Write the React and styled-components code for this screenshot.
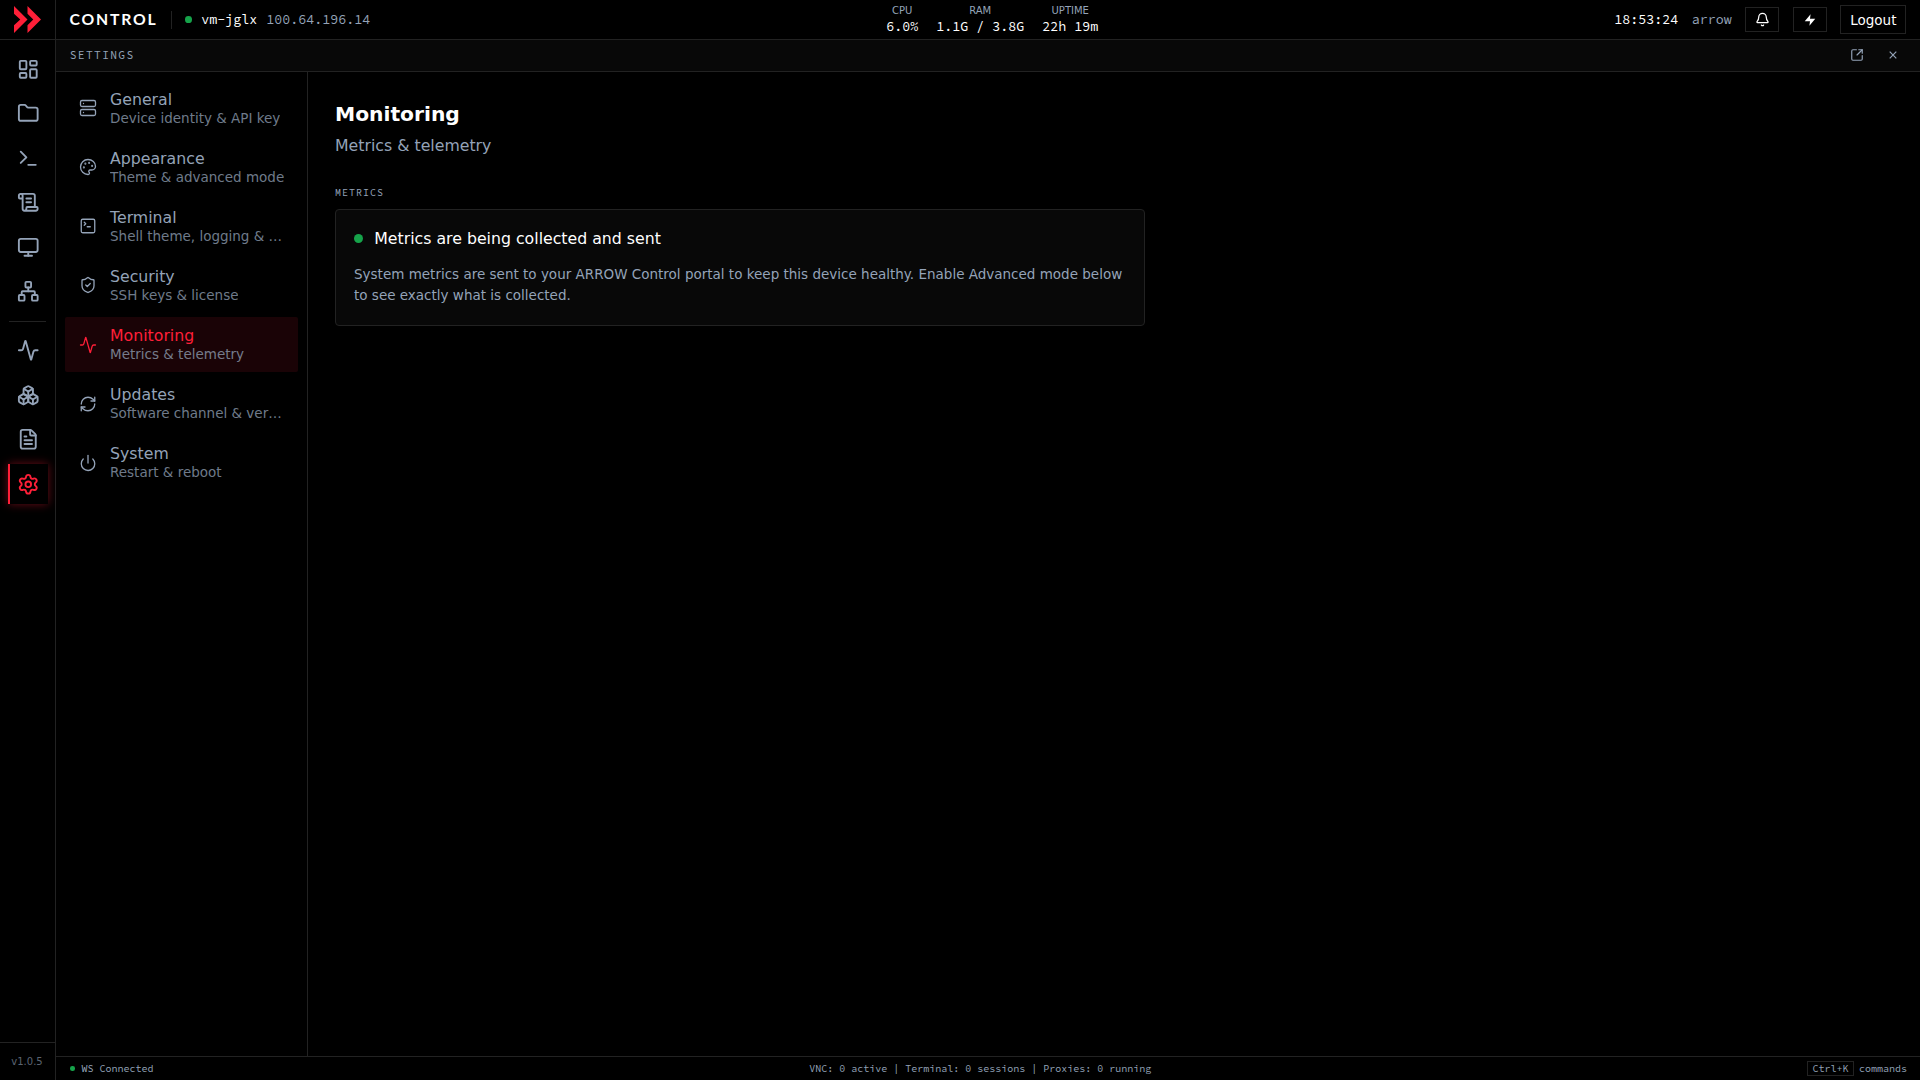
import React from 'react';
import styled, { createGlobalStyle, css } from 'styled-components';
import {
  Activity,
  Bell,
  Boxes,
  FileText,
  Folder,
  LayoutDashboard,
  Monitor,
  Network,
  Palette,
  Power,
  RefreshCw,
  ScrollText,
  Server,
  Settings,
  ShieldCheck,
  SquareArrowOutUpRight,
  SquareTerminal,
  Terminal,
} from 'lucide-react';

const sans = '"DejaVu Sans", sans-serif';
const mono = '"Source Code Pro", "DejaVu Sans Mono", monospace';
const brandFont = 'Lato, sans-serif';

const accent = '#ff1f38';
const green = '#16a34a';
const line = '#222222';
const panel = '#080808';
const muted = '#94a3b8';
const white = '#ffffff';

const GlobalStyle = createGlobalStyle`
  * {
    box-sizing: border-box;
  }

  html {
    font-size: 18px;
  }

  body {
    margin: 0;
    background: #000;
    color: ${white};
    font-family: ${sans};
  }

  h1, p {
    margin: 0;
  }

  button {
    padding: 0;
    border: 0;
    background: none;
    color: inherit;
    font-family: inherit;
  }
`;

const Shell = styled.div`
  display: flex;
  width: 100%;
  height: 100vh;
  overflow: hidden;
`;

const Rail = styled.aside`
  display: flex;
  flex-direction: column;
  flex: none;
  width: 56px;
  border-right: 1px solid ${line};
`;

const LogoBox = styled.div`
  display: flex;
  align-items: center;
  justify-content: center;
  height: 40px;
  border-bottom: 1px solid ${line};
`;

const RailNav = styled.nav`
  display: flex;
  flex-direction: column;
  align-items: center;
  flex: 1;
  gap: 0.25rem;
  padding: 0.5rem 0 0.5rem 1px;
`;

const RailButton = styled.button`
  display: flex;
  align-items: center;
  justify-content: center;
  width: 40px;
  height: 40px;
  color: ${muted};

  ${({ $active }) => $active && css`
    color: ${accent};
    background: #000;
    box-shadow: inset 2px 0 0 ${accent}, 0 0 9px rgba(255, 31, 56, 0.4);
  `}
`;

const RailDivider = styled.div`
  width: 37px;
  height: 1px;
  margin: 0.25rem 1px 0.25rem 0;
  background: ${line};
`;

const Version = styled.div`
  height: 38px;
  padding-right: 1px;
  border-top: 1px solid ${line};
  color: #5b6472;
  font-size: 10px;
  line-height: 37px;
  text-align: center;
`;

const Page = styled.div`
  display: flex;
  flex-direction: column;
  flex: 1;
  min-width: 0;
`;

const Header = styled.header`
  display: flex;
  align-items: center;
  justify-content: space-between;
  flex: none;
  height: 40px;
  padding: 0 0.75rem;
  border-bottom: 1px solid ${line};
`;

const HeaderGroup = styled.div`
  display: flex;
  align-items: center;
  gap: 0.75rem;
`;

const Brand = styled.span`
  padding-bottom: 2px;
  font-family: ${brandFont};
  font-size: 15.75px;
  font-weight: 700;
  letter-spacing: 1.8px;
`;

const HeaderDivider = styled.span`
  width: 1px;
  height: 18px;
  background: ${line};
`;

const Host = styled.div`
  display: flex;
  align-items: center;
  gap: 0.5rem;
`;

const Dot = styled.span`
  flex: none;
  width: ${({ $size }) => $size};
  height: ${({ $size }) => $size};
  border-radius: 50%;
  background: ${green};
`;

const Mono = styled.span`
  font-family: ${mono};
  font-size: 13.333px;
  color: ${({ $muted }) => ($muted ? muted : white)};
`;

const Stats = styled.div`
  display: flex;
  gap: 1rem;
`;

const Stat = styled.div`
  display: flex;
  flex-direction: column;
  align-items: center;
`;

const StatLabel = styled.span`
  color: ${muted};
  font-size: 10px;
  line-height: 15px;
`;

const StatValue = styled.span`
  font-family: ${mono};
  font-size: 13.333px;
  line-height: 18px;
`;

const IconButton = styled.button`
  display: flex;
  align-items: center;
  justify-content: center;
  width: 34px;
  height: 25px;
  border: 1px solid ${line};
`;

const LogoutButton = styled.button`
  height: 29px;
  padding: 0 9px;
  border: 1px solid ${line};
  font-size: 0.75rem;
`;

const TitleBar = styled.div`
  display: flex;
  align-items: center;
  justify-content: space-between;
  flex: none;
  height: 32px;
  padding: 0 0.75rem 0 13.75px;
  border-bottom: 1px solid ${line};
  background: ${panel};
`;

const TitleText = styled.span`
  padding-bottom: 2px;
  color: ${muted};
  font-family: ${mono};
  font-size: 11.25px;
  letter-spacing: 1.35px;
`;

const TitleActions = styled.div`
  display: flex;
  align-items: center;
  gap: 25px;
  padding: 0 9.5px 1px 0;
  color: ${muted};
`;

const Body = styled.div`
  display: flex;
  flex: 1;
  min-height: 0;
`;

const SideNav = styled.nav`
  display: flex;
  flex-direction: column;
  flex: none;
  gap: 0.25rem;
  width: 14rem;
  padding: 0.5rem;
  border-right: 1px solid ${line};
`;

const NavItem = styled.a`
  display: flex;
  align-items: center;
  gap: 0.75rem;
  padding: 0.5rem 0.75rem;
  border-radius: 2px;
  background: ${({ $active }) => ($active ? 'rgba(255, 31, 56, 0.1)' : 'transparent')};
  color: ${({ $active }) => ($active ? accent : muted)};

  svg {
    flex: none;
  }
`;

const NavText = styled.div`
  min-width: 0;
`;

const NavTitle = styled.div`
  font-size: 0.875rem;
  line-height: 1.25;
`;

const NavHint = styled.div`
  overflow: hidden;
  color: ${muted};
  font-size: 0.75rem;
  line-height: 1.25;
  opacity: 0.75;
  text-overflow: ellipsis;
  white-space: nowrap;
`;

const Main = styled.main`
  flex: 1;
  padding: 1.5rem;
`;

const Heading = styled.h1`
  font-size: 1.125rem;
  font-weight: 700;
  line-height: 31.5px;
`;

const Subtitle = styled.p`
  margin-top: 4.5px;
  color: ${muted};
  font-size: 0.875rem;
  line-height: 22.5px;
`;

const SectionLabel = styled.div`
  margin: 27px 0 9px;
  color: ${muted};
  font-family: ${mono};
  font-size: 10px;
  letter-spacing: 1px;
  line-height: 15px;
`;

const Card = styled.section`
  width: 45rem;
  padding: 1rem;
  border: 1px solid ${line};
  border-radius: 4px;
  background: ${panel};
`;

const CardTitle = styled.div`
  display: flex;
  align-items: center;
  gap: 0.625rem;
  font-size: 0.875rem;
  line-height: 22.5px;
`;

const CardText = styled.p`
  margin-top: 0.75rem;
  color: ${muted};
  font-size: 0.75rem;
  line-height: 21.5px;
`;

const Footer = styled.footer`
  display: flex;
  align-items: center;
  justify-content: space-between;
  flex: none;
  height: 24px;
  padding: 0 13px 0 14px;
  border-top: 1px solid ${line};
  color: ${muted};
  font-family: ${mono};
  font-size: 10px;
`;

const FooterGroup = styled.div`
  display: flex;
  align-items: center;
  gap: ${({ $gap }) => $gap};
`;

const Kbd = styled.kbd`
  padding: 0 4.5px;
  border: 1px solid ${line};
  font: inherit;
  line-height: 13px;
`;

const Logo = () => (
  <svg width="27" height="27" viewBox="0 0 28 28" fill={accent}>
    <path d="M0 0 14 14 0 28V20L6.5 14 0 8Z" />
    <path d="M14 0 28 14 14 28V20L20 14 14 8Z" />
  </svg>
);

const Bolt = () => (
  <svg width="14" height="14" viewBox="0 0 24 24" fill="currentColor">
    <path d="M13 2 3 14h9l-1 8 10-12h-9l1-8z" />
  </svg>
);

const Close = () => (
  <svg width="8" height="8" viewBox="0 0 8 8" fill="none" stroke="currentColor" strokeWidth="1.2">
    <path d="M0.7 0.7 7.3 7.3M7.3 0.7 0.7 7.3" />
  </svg>
);

const apps = [LayoutDashboard, Folder, Terminal, ScrollText, Monitor, Network];
const tools = [Activity, Boxes, FileText, Settings];

const stats = [
  { label: 'CPU', value: '6.0%' },
  { label: 'RAM', value: '1.1G / 3.8G' },
  { label: 'UPTIME', value: '22h 19m' },
];

const sections = [
  { title: 'General', hint: 'Device identity & API key', icon: Server },
  { title: 'Appearance', hint: 'Theme & advanced mode', icon: Palette },
  { title: 'Terminal', hint: 'Shell theme, logging & sessions', icon: SquareTerminal },
  { title: 'Security', hint: 'SSH keys & license', icon: ShieldCheck },
  { title: 'Monitoring', hint: 'Metrics & telemetry', icon: Activity },
  { title: 'Updates', hint: 'Software channel & version', icon: RefreshCw },
  { title: 'System', hint: 'Restart & reboot', icon: Power },
];

const App = () => (
  <Shell>
    <GlobalStyle />
    <Rail>
      <LogoBox><Logo /></LogoBox>
      <RailNav>
        {apps.map((Icon, i) => (
          <RailButton key={i}><Icon size={22.5} /></RailButton>
        ))}
        <RailDivider />
        {tools.map((Icon, i) => (
          <RailButton key={i} $active={Icon === Settings}><Icon size={22.5} /></RailButton>
        ))}
      </RailNav>
      <Version>v1.0.5</Version>
    </Rail>
    <Page>
      <Header>
        <HeaderGroup>
          <Brand>CONTROL</Brand>
          <HeaderDivider />
          <Host>
            <Dot $size="0.375rem" />
            <Mono>vm-jglx</Mono>
            <Mono $muted>100.64.196.14</Mono>
          </Host>
        </HeaderGroup>
        <Stats>
          {stats.map(({ label, value }) => (
            <Stat key={label}>
              <StatLabel>{label}</StatLabel>
              <StatValue>{value}</StatValue>
            </Stat>
          ))}
        </Stats>
        <HeaderGroup>
          <Mono>18:53:24</Mono>
          <Mono $muted>arrow</Mono>
          <IconButton><Bell size={15} /></IconButton>
          <IconButton><Bolt /></IconButton>
          <LogoutButton>Logout</LogoutButton>
        </HeaderGroup>
      </Header>
      <TitleBar>
        <TitleText>SETTINGS</TitleText>
        <TitleActions>
          <SquareArrowOutUpRight size={14} />
          <Close />
        </TitleActions>
      </TitleBar>
      <Body>
        <SideNav>
          {sections.map(({ title, hint, icon: Icon }) => (
            <NavItem key={title} $active={title === 'Monitoring'}>
              <Icon size={18} strokeWidth={1.75} />
              <NavText>
                <NavTitle>{title}</NavTitle>
                <NavHint>{hint}</NavHint>
              </NavText>
            </NavItem>
          ))}
        </SideNav>
        <Main>
          <Heading>Monitoring</Heading>
          <Subtitle>Metrics &amp; telemetry</Subtitle>
          <SectionLabel>METRICS</SectionLabel>
          <Card>
            <CardTitle>
              <Dot $size="0.5rem" />
              Metrics are being collected and sent
            </CardTitle>
            <CardText>
              System metrics are sent to your ARROW Control portal to keep this device healthy.
              Enable Advanced mode below to see exactly what is collected.
            </CardText>
          </Card>
        </Main>
      </Body>
      <Footer>
        <FooterGroup $gap="7px">
          <Dot $size="4.5px" />
          WS Connected
        </FooterGroup>
        <span>VNC: 0 active | Terminal: 0 sessions | Proxies: 0 running</span>
        <FooterGroup $gap="5px">
          <Kbd>Ctrl+K</Kbd>
          commands
        </FooterGroup>
      </Footer>
    </Page>
  </Shell>
);

export default App;
